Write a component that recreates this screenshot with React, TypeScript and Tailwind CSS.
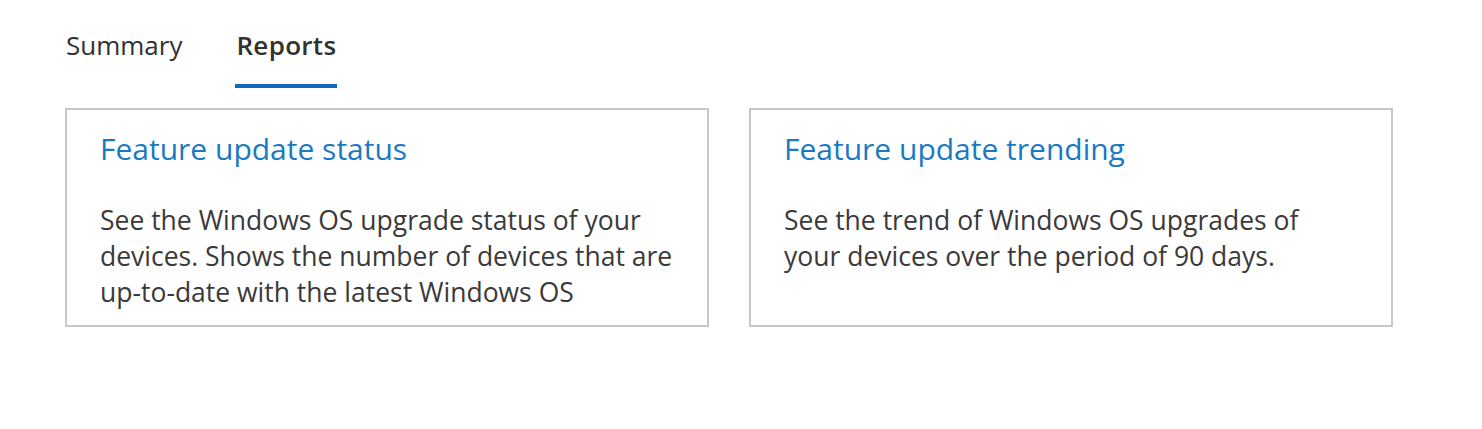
export default function App() {
  return (
    <div className="w-[1482px] h-[429px] bg-white" style={{ fontFamily: '"Open Sans", "Noto Sans", sans-serif' }}>
      <div className="pl-[65px] pt-[21px]">
        <div className="flex h-[67px]">
          <div className="px-[1px] text-[26px] leading-[48px] text-[#323130]">Summary</div>
          <div className="relative ml-[52px] px-[1px] text-[26px] leading-[48px] font-semibold tracking-[0.3px] text-[#323130]">
            Reports
            <div className="absolute left-0 right-0 top-[63px] h-[4px] bg-[#0f6cbd]" />
          </div>
        </div>
        <div className="mt-[20px] flex gap-[40px]">
          <div className="w-[644px] h-[219px] border-2 border-[#c8c8c8] pl-[33px] pr-[10px] pt-[19px]">
            <div className="text-[30px] leading-[40px] text-[#1a79c3]">Feature update status</div>
            <div className="mt-[33px] text-[26.5px] leading-[36px] text-[#3b3a39]">
              See the Windows OS upgrade status of your
              <br />
              devices. Shows the number of devices that are
              <br />
              <span className="whitespace-nowrap">up-to-date</span> with the latest Windows OS
            </div>
          </div>
          <div className="w-[644px] h-[219px] border-2 border-[#c8c8c8] pl-[33px] pr-[10px] pt-[19px]">
            <div className="text-[30px] leading-[40px] text-[#1a79c3]">Feature update trending</div>
            <div className="mt-[33px] text-[26.5px] leading-[36px] text-[#3b3a39]">
              See the trend of Windows OS upgrades of
              <br />
              your devices over the period of 90 days.
            </div>
          </div>
        </div>
      </div>
    </div>
  );
}
